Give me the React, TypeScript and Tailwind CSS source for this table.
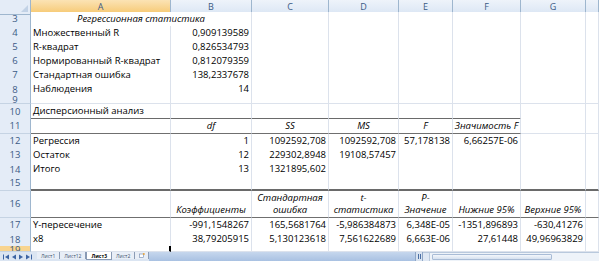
type Cell = {
  t?: string
  a?: 'l' | 'r' | 'c'
  i?: boolean
  b?: 'grid' | 'thin' | 'thick' | 'none'
  span?: boolean
  sel?: boolean
}

type RowDef = { n: string, h: string, cells: Cell[], tall?: boolean, hl?: boolean }

const E: Cell = {}

const bottomCls = {
  grid: 'border-b border-b-[#dce2ec]',
  thin: 'border-b border-b-[#6f6f6f]',
  thick: 'border-b-2 border-b-[#6a6a6a]',
  none: 'border-b border-b-transparent'
}

const alignCls = { l: 'justify-start pl-[2px]', r: 'justify-end pr-[2px]', c: 'justify-center' }

const fill = (cells: Cell[], b: Cell['b'] = 'grid', to = 8): Cell[] => {
  const out = cells.map((c) => ({ b, ...c }))
  while (out.length < to) out.push({ b: 'grid' })
  return out
}

const rows: RowDef[] = [
  { n: '3', h: 'h-[14px]', cells: fill([{ t: 'Регрессионная статистика', a: 'c', i: true, span: true, b: 'thin' }], 'grid', 7) },
  { n: '4', h: 'h-[14px]', cells: fill([{ t: 'Множественный R' }, { t: '0,909139589', a: 'r' }]) },
  { n: '5', h: 'h-[14px]', cells: fill([{ t: 'R-квадрат' }, { t: '0,826534793', a: 'r' }]) },
  { n: '6', h: 'h-[14px]', cells: fill([{ t: 'Нормированный R-квадрат' }, { t: '0,812079359', a: 'r' }]) },
  { n: '7', h: 'h-[14px]', cells: fill([{ t: 'Стандартная ошибка' }, { t: '138,2337678', a: 'r' }]) },
  { n: '8', h: 'h-[14px]', cells: fill([{ t: 'Наблюдения' }, { t: '14', a: 'r' }], 'thick') },
  { n: '9', h: 'h-[8px]', cells: fill([]) },
  { n: '10', h: 'h-[15px]', cells: fill([{ t: 'Дисперсионный анализ' }, E, E, E, E, E], 'thick') },
  {
    n: '11', h: 'h-[15px]', cells: fill([
      E, { t: 'df', a: 'c', i: true }, { t: 'SS', a: 'c', i: true }, { t: 'MS', a: 'c', i: true },
      { t: 'F', a: 'c', i: true }, { t: 'Значимость F', a: 'c', i: true }
    ], 'thin')
  },
  {
    n: '12', h: 'h-[14px]', cells: fill([
      { t: 'Регрессия' }, { t: '1', a: 'r' }, { t: '1092592,708', a: 'r' }, { t: '1092592,708', a: 'r' },
      { t: '57,178138', a: 'r' }, { t: '6,66257E-06', a: 'r' }
    ])
  },
  {
    n: '13', h: 'h-[14px]', cells: fill([
      { t: 'Остаток' }, { t: '12', a: 'r' }, { t: '229302,8948', a: 'r' }, { t: '19108,57457', a: 'r' }, E, E
    ])
  },
  {
    n: '14', h: 'h-[14px]', cells: fill([
      { t: 'Итого' }, { t: '13', a: 'r' }, { t: '1321895,602', a: 'r' }, E, E, E
    ], 'thick')
  },
  { n: '15', h: 'h-[15px]', cells: fill([E, E, E, E, E, E, E, E], 'thick') },
  {
    n: '16', h: 'h-[27px]', tall: true, cells: fill([
      E, { t: 'Коэффициенты', a: 'c', i: true }, { t: 'Стандартная ошибка', a: 'c', i: true },
      { t: 't- статистика', a: 'c', i: true }, { t: 'P- Значение', a: 'c', i: true },
      { t: 'Нижние 95%', a: 'c', i: true }, { t: 'Верхние 95%', a: 'c', i: true }, E
    ], 'thin')
  },
  {
    n: '17', h: 'h-[14px]', cells: fill([
      { t: 'Y-пересечение' }, { t: '-991,1548267', a: 'r' }, { t: '165,5681764', a: 'r' },
      { t: '-5,986384873', a: 'r' }, { t: '6,348E-05', a: 'r' }, { t: '-1351,896893', a: 'r' },
      { t: '-630,41276', a: 'r' }
    ])
  },
  {
    n: '18', h: 'h-[14px]', cells: fill([
      { t: 'x8' }, { t: '38,79205915', a: 'r' }, { t: '5,130123618', a: 'r' },
      { t: '7,561622689', a: 'r' }, { t: '6,663E-06', a: 'r' }, { t: '27,61448', a: 'r' },
      { t: '49,96963829', a: 'r' }, E
    ], 'thick')
  },
  { n: '19', h: 'h-[6px]', hl: true, cells: fill([{ sel: true }]) }
]

const gridCols = 'grid grid-cols-[31px_140px_81px_77px_70px_54px_68px_65px_1fr]'

function Row ({ row }: { row: RowDef }) {
  return (
    <div className={`${gridCols} ${row.h} overflow-hidden`}>
      <div className={`flex overflow-hidden justify-center border-r border-r-[#9eb6ce] border-b border-b-[#c5d3e3] text-[#3b5a85] ${row.h === 'h-[8px]' || row.hl ? 'items-start leading-[8px]' : 'items-center'} ${row.hl ? 'bg-[#f8d48f]' : 'bg-[#e4ecf7]'}`}>
        {row.n}
      </div>
      {row.cells.map((c, idx) => (
        <div
          key={idx}
          className={[
            'flex min-w-0 whitespace-nowrap bg-white',
            c.span ? 'col-span-2' : '',
            row.tall ? 'items-end text-center leading-[12px] pb-[1px]' : 'items-center',
            alignCls[c.a ?? 'l'],
            bottomCls[c.b ?? 'grid'],
            c.sel ? 'border-r-2 border-r-black' : 'border-r border-r-[#dce2ec]',
            c.i ? 'italic' : ''
          ].join(' ')}
        >
          {row.tall && c.t && c.t.split(' ').length === 2 && !c.t.includes('95%')
            ? <span className="flex flex-col">{c.t.split(' ').map((w) => <span key={w}>{w}</span>)}</span>
            : c.t}
        </div>
      ))}
    </div>
  )
}

function Arrow ({ dir, bar }: { dir: 'l' | 'r', bar?: boolean }) {
  return (
    <svg width={bar ? 6 : 4} height="6" viewBox={bar ? '0 0 6 6' : '0 0 4 6'} className="fill-[#3d64a3]">
      {dir === 'l'
        ? <>{bar && <rect x="0" y="0.5" width="1" height="5" />}<polygon points={bar ? '6,0.5 6,5.5 2,3' : '4,0.5 4,5.5 0,3'} /></>
        : <><polygon points="0,0.5 0,5.5 4,3" />{bar && <rect x="5" y="0.5" width="1" height="5" />}</>}
    </svg>
  )
}

function TabBar () {
  const tabs = ['Лист1', 'Лист12', 'Лист3', 'Лист2']
  return (
    <div className="flex h-[9px] bg-[#dbe5f2] text-[5px] leading-[8px] text-[#3c4f6b] overflow-hidden">
      <div className="flex w-[37px] items-center gap-[3px] pl-[3px]">
        <Arrow dir="l" bar /><Arrow dir="l" /><Arrow dir="r" /><Arrow dir="r" bar />
      </div>
      <div className="flex items-start">
        {tabs.map((t) => (
          <div
            key={t}
            className={t === 'Лист3'
              ? 'px-[4px] bg-white border-x border-b border-[#8a9bb5] font-bold text-black h-[8px]'
              : 'px-[4px] border-r border-[#8a9bb5] h-[7px] bg-[#e8eef7]'}
          >
            {t}
          </div>
        ))}
        <div className="w-[14px] h-[7px] bg-[#e8eef7] border-r border-[#8a9bb5] flex items-center justify-center">
          <svg width="6" height="5" viewBox="0 0 6 5"><rect x="0.5" y="1" width="4" height="3.5" fill="#fff" stroke="#6d86ad" strokeWidth="0.6" /><circle cx="4.8" cy="1" r="1" fill="#e6a23c" /></svg>
        </div>
      </div>
      <div className="flex-1 bg-gradient-to-b from-[#c6d7ed] to-[#a9c1e2]" />
      <div className="w-[8px] bg-[#d7e2f0] border-x border-[#8fa6c6] flex items-center justify-center">
        <div className="w-[3px] h-[5px] border-x border-[#4a6fa5]" />
      </div>
      <div className="flex w-[176px] items-center bg-[#eef3f9] border-t border-[#b9c9dd]">
        <div className="w-[7px] h-full bg-[#dfe8f4] border-r border-[#b9c9dd]" />
        <div className="ml-[2px] w-[120px] h-[6px] rounded-[1px] bg-gradient-to-b from-[#f4f7fb] to-[#d6e1ef] border border-[#a9bcd6]" />
      </div>
    </div>
  )
}

export default function App () {
  const heads = ['A', 'B', 'C', 'D', 'E', 'F', 'G', '']
  return (
    <div className="w-[599px] h-[261px] overflow-hidden bg-white text-[9.5px] text-black" style={{ fontFamily: '"Open Sans", "Liberation Sans", sans-serif' }}>
      <div className={`${gridCols} h-[12px] text-[9px] text-[#3b5a85]`}>
        <div className="relative bg-[#e4ecf7] border-r border-b border-[#9eb6ce]">
          <div className="absolute right-[2px] bottom-[2px] w-0 h-0 border-l-[7px] border-l-transparent border-b-[7px] border-b-[#c2d2e6]" />
        </div>
        {heads.map((h, i) => (
          <div
            key={i}
            className={`flex items-center justify-center border-r border-b border-[#9eb6ce] ${i === 0 ? 'bg-gradient-to-b from-[#fbe3b4] to-[#f6c86f]' : 'bg-gradient-to-b from-[#eef3fa] to-[#dbe6f4]'}`}
          >
            {h}
          </div>
        ))}
      </div>
      {rows.map((r) => <Row key={r.n} row={r} />)}
      <TabBar />
    </div>
  )
}
